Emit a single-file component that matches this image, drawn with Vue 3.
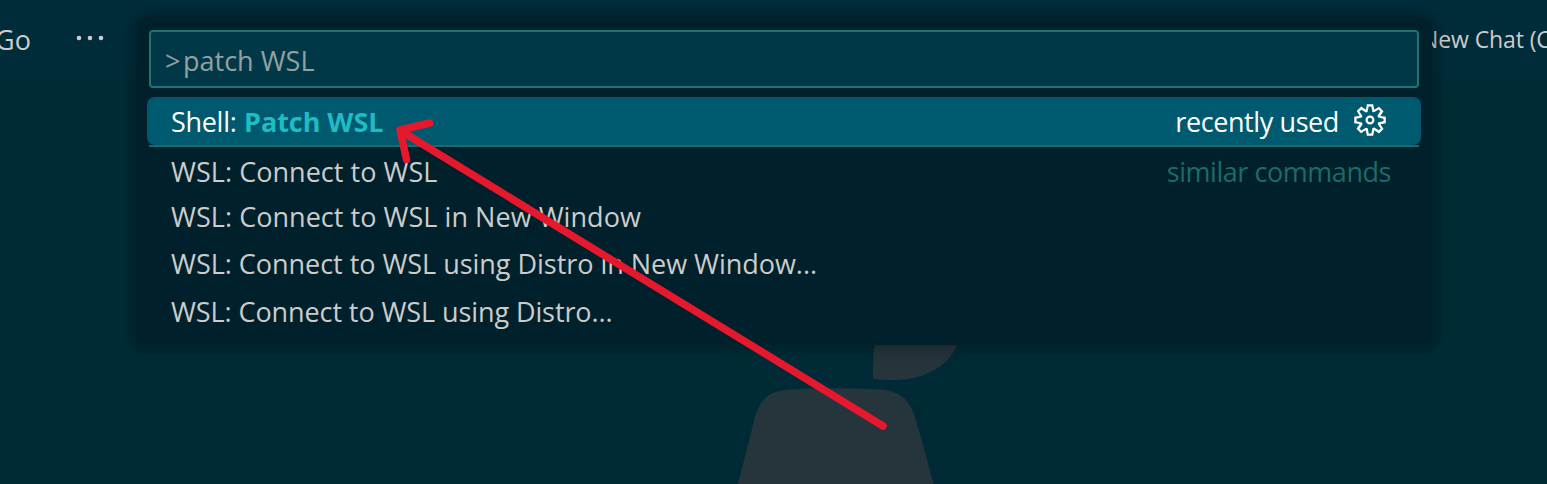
<script setup>
const commands = [
  { id: 'connect', label: 'WSL: Connect to WSL', hint: 'similar commands' },
  { id: 'new-window', label: 'WSL: Connect to WSL in New Window' },
  { id: 'distro-window', label: 'WSL: Connect to WSL using Distro in New Window...' },
  { id: 'distro', label: 'WSL: Connect to WSL using Distro...' },
]
</script>

<template>
  <div class="window">
    <header class="titlebar">
      <span class="menu">Go</span>
      <svg class="dots" viewBox="0 0 30 6"><circle cx="3" cy="3" r="2.3" /><circle cx="14" cy="3" r="2.3" /><circle cx="25" cy="3" r="2.3" /></svg>
      <span class="tab">New Chat (C</span>
    </header>

    <svg class="watermark" viewBox="0 0 1547 484">
      <path d="M878 330Q872 350 873 378.500C914 385 946 371 957 345L962 330Z" />
      <path d="M738 484L755 417C761 397 770 391 790 389.500Q835 387 880 389.500C900 391 909 399 915 417Q919 430 933.500 484Z" />
    </svg>

    <section class="palette">
      <div class="field"><span class="prompt">&gt;</span><span class="query">patch WSL</span></div>
      <div class="row active">
        <span class="shell">Shell:</span><strong class="match">Patch WSL</strong>
        <span class="recent">recently used</span>
        <svg class="gear" viewBox="0 0 16 16">
          <path fill-rule="evenodd" d="M9.1 4.4L8.6 2H7.4l-.5 2.4-.7.3-2-1.3-.9.8 1.3 2-.2.7-2.4.5v1.2l2.4.5.3.8-1.3 2 .8.8 2-1.3.8.3.4 2.3h1.2l.5-2.4.8-.3 2 1.3.8-.8-1.3-2 .3-.8 2.3-.4V7.4l-2.4-.5-.3-.8 1.3-2-.8-.8-2 1.3-.7-.2zM9.4 1l.5 2.4L12 2.1l2 2-1.4 2.1 2.4.4v2.8l-2.4.5L14 12l-2 2-2.1-1.4-.5 2.4H6.6l-.5-2.4L4 13.900l-2-2 1.4-2.1L1 9.4V6.6l2.4-.5L2.1 4l2-2 2.1 1.4.4-2.4h2.8zm.6 7c0 1.1-.9 2-2 2s-2-.9-2-2 .9-2 2-2 2 .9 2 2zM8 9c.6 0 1-.4 1-1s-.4-1-1-1-1 .4-1 1 .4 1 1 1z" />
        </svg>
      </div>
      <div class="divider"></div>
      <div v-for="c in commands" :key="c.id" class="row" :class="c.id">
        <span class="label">{{ c.label }}</span>
        <span v-if="c.hint" class="hint">{{ c.hint }}</span>
      </div>
    </section>

    <svg class="arrow" viewBox="0 0 1547 484">
      <path d="M883 426L401 131M429.500 123L400 130L406.500 159.500" />
    </svg>
  </div>
</template>

<style>
body { margin: 0; }
</style>

<style scoped>
.window {
  position: relative;
  width: 1547px;
  height: 484px;
  overflow: hidden;
  background: #002b36;
  font-family: "Open Sans", "Noto Sans", sans-serif;
  font-size: 27px;
  color: #cccccc;
}
.window span, .window strong { white-space: pre; }
.titlebar {
  display: flex;
  align-items: center;
  height: 75px;
  background: #002c39;
}
.menu { flex: none; margin-left: -5px; width: 81px; font-size: 27px; padding-top: 3px; }
.dots { flex: none; width: 30px; height: 6px; fill: #cccccc; }
.tab { margin-left: 1315px; font-size: 23px; letter-spacing: -0.1px; flex: none; padding-top: 2px; }
.watermark, .arrow { position: absolute; left: 0; top: 0; width: 1547px; height: 484px; }
.watermark { fill: #26343c; }
.arrow { fill: none; stroke: #e6182d; stroke-width: 7.5; stroke-linecap: round; stroke-linejoin: round; pointer-events: none; }
.palette {
  position: absolute;
  left: 137px;
  top: 18px;
  width: 1295px;
  height: 327px;
  box-sizing: border-box;
  padding: 12px 11px 0 10px;
  background: #00212b;
  border-radius: 12px 12px 0 0;
  box-shadow: 0 0 16px 3px rgba(0, 0, 0, 0.3);
}
.field {
  display: flex;
  align-items: center;
  box-sizing: border-box;
  height: 58px;
  margin: 0 2px 9px;
  padding: 2px 0 0 14px;
  border: 2px solid #1b7472;
  border-radius: 4px;
  background: #003847;
  color: #93a1a1;
}
.prompt { width: 18px; }
.query { letter-spacing: 0; }
.row {
  display: flex;
  align-items: center;
  height: 47px;
  padding: 0 30px 0 24px;
}
.active { height: 48px; background: #005a6f; border-radius: 8px; color: #fff; box-sizing: border-box; padding-right: 33px; }
.shell { width: 73px; letter-spacing: -0.3px; }
.match { color: #1ebcc5; letter-spacing: -0.05px; }
.recent { margin-left: auto; margin-right: 13px; letter-spacing: -0.4px; }
.gear { width: 36px; height: 36px; fill: #fff; margin-bottom: 3px; }
.divider { height: 2px; margin: 0 2px; background: #1b6c69; }
.connect { height: 48px; }
.new-window { height: 42px; }
.distro-window { height: 53px; }
.distro { height: 42px; }
.label { letter-spacing: 0.04px; }
.distro-window .label { letter-spacing: -0.03px; }
.distro .label { letter-spacing: -0.09px; }
.hint { margin-left: auto; color: #1b6c69; letter-spacing: -0.45px; }
</style>
